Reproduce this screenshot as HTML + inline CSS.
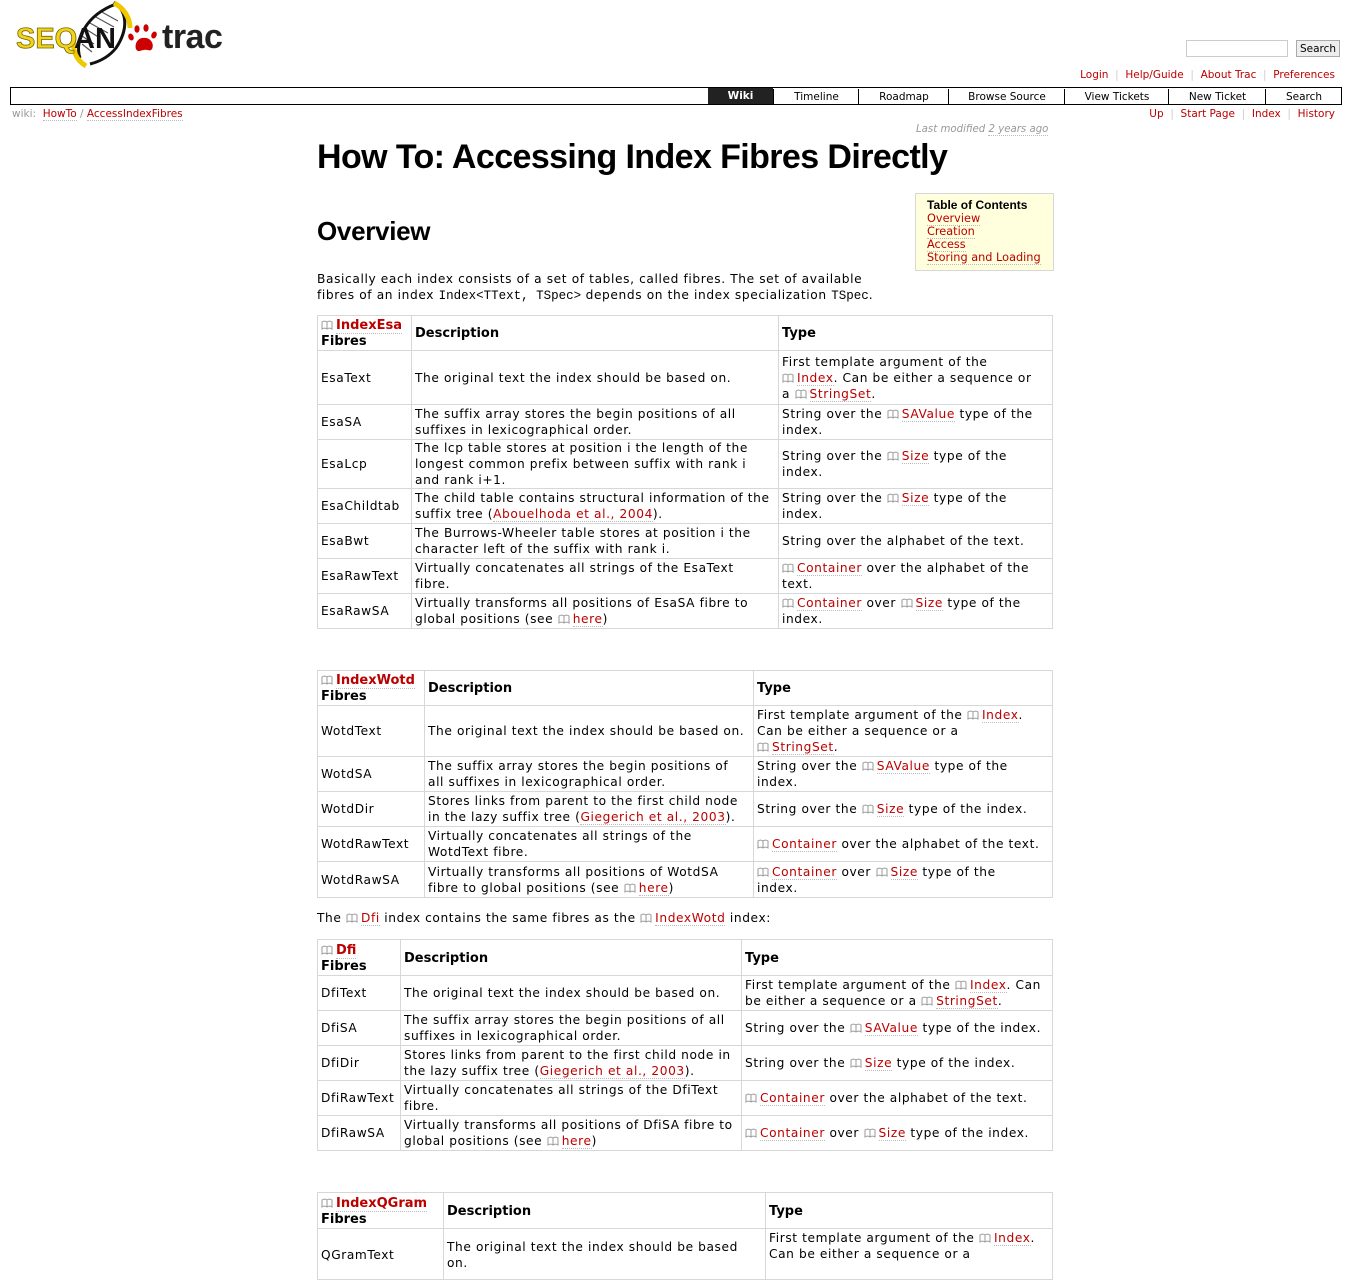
<!DOCTYPE html>
<html><head><meta charset="utf-8"><style>
body{margin:0;width:1352px;height:1249px;overflow:hidden;background:#fff;font-family:"DejaVu Sans","Liberation Sans",sans-serif;font-size:12px;color:#000;position:relative}
a{color:#b00;text-decoration:none;border-bottom:1px dotted #bbb}
.abs{position:absolute}
.meta a{color:#b00;border:none}
.bk{vertical-align:-1px;margin-right:3px}
table.w{position:absolute;left:317px;width:735px;border-collapse:collapse;table-layout:fixed;font-size:12.2px;letter-spacing:0.6px;line-height:16px}
table.w td,table.w th{border:1px solid #d7d7d7;padding:0 3px;vertical-align:middle;text-align:left;white-space:nowrap;overflow:hidden}
table.w th{font-weight:bold;font-size:13px;letter-spacing:0;padding-top:2px}
table.w th a{font-weight:bold}
tt{font-family:"Liberation Mono",monospace;font-size:12.5px;letter-spacing:0}
.nav{position:absolute;left:10px;top:87px;width:1330px;height:16px;border:1px solid #000;background:#fff}
.nav div{position:absolute;top:1px;height:16px;font-size:10.5px;line-height:16px;text-align:center;border-left:1px solid #000}
.small{font-size:10.5px}
</style></head><body>

<!-- logo -->
<div class="abs" style="left:16px;top:0;width:220px;height:70px">
<svg width="220" height="70" viewBox="0 0 220 70">
<g stroke="#555" stroke-width="1.2"><line x1="68" y1="28" x2="84" y2="38"/><line x1="72" y1="22" x2="92" y2="33"/><line x1="78" y1="16" x2="98" y2="27"/><line x1="84" y1="11" x2="102" y2="21"/><line x1="66" y1="36" x2="78" y2="44"/><line x1="66" y1="44" x2="76" y2="52"/></g>
<path d="M64 58 C58 40,70 15,100 4" fill="none" stroke="#111" stroke-width="3"/>
<path d="M98 2 C112 12,112 30,100 48 C92 58,82 62,74 64" fill="none" stroke="#111" stroke-width="3"/>
<path d="M98 3 C108 8,114 18,114 28" fill="none" stroke="#f0c800" stroke-width="5"/>
<path d="M58 38 C56 50,60 60,70 66" fill="none" stroke="#f0c800" stroke-width="5"/>
<text x="0" y="48" font-family="Liberation Sans" font-weight="bold" font-size="29" fill="#f2d31b" stroke="#776600" stroke-width="0.8">SEQ</text>
<text x="58" y="48" font-family="Liberation Sans" font-weight="bold" font-size="29" fill="#111">AN</text>
<g fill="#c00"><path d="M120 49 C118 42,124 37,128 38 C133 37,139 43,136 49 C134 52,131 49,128 50 C125 50,122 53,120 49Z"/><ellipse cx="115" cy="37" rx="2.6" ry="3.6" transform="rotate(-25 115 37)"/><ellipse cx="121" cy="29" rx="2.6" ry="3.8"/><ellipse cx="130" cy="28" rx="2.6" ry="3.8"/><ellipse cx="138" cy="35" rx="2.6" ry="3.6" transform="rotate(25 138 35)"/></g>
<text x="146" y="48" font-family="Liberation Sans" font-weight="bold" font-size="34" fill="#222" letter-spacing="-0.5">trac</text>
</svg></div>

<!-- search -->
<div class="abs" style="left:1186px;top:40px;width:100px;height:15px;border:1px solid #ccc"></div>
<div class="abs" style="left:1296px;top:40px;width:42px;height:15px;border:1px solid #aaa;background:#eee;font-size:10.5px;line-height:16px;text-align:center">Search</div>

<div class="abs meta small" style="right:17px;top:69px;color:#ccc">
<a>Login</a> &nbsp;|&nbsp; <a>Help/Guide</a> &nbsp;|&nbsp; <a>About Trac</a> &nbsp;|&nbsp; <a>Preferences</a></div>

<div class="nav">
<div style="left:697px;width:65px;background:#222;color:#fff;font-weight:bold;border:none;top:0;line-height:17px">Wiki</div>
<div style="left:762px;width:85px">Timeline</div>
<div style="left:847px;width:90px">Roadmap</div>
<div style="left:937px;width:116px">Browse Source</div>
<div style="left:1053px;width:104px">View Tickets</div>
<div style="left:1157px;width:97px">New Ticket</div>
<div style="left:1254px;width:76px">Search</div>
</div>

<div class="abs small" style="left:12px;top:108px;color:#999">wiki: &nbsp;<a style="font-size:10.5px">HowTo</a> / <a>AccessIndexFibres</a></div>
<div class="abs meta small" style="right:17px;top:108px;color:#ccc">
<a>Up</a> &nbsp;|&nbsp; <a>Start Page</a> &nbsp;|&nbsp; <a>Index</a> &nbsp;|&nbsp; <a>History</a></div>

<div class="abs" style="left:916px;top:124px;font-size:10.2px;font-style:italic;color:#999">Last modified <span style="border-bottom:1px dotted #bbb">2 years ago</span></div>

<div class="abs" style="left:317px;top:138px;font-family:'Liberation Sans',sans-serif;font-weight:bold;font-size:34px;letter-spacing:-0.6px;white-space:nowrap">How To: Accessing Index Fibres Directly</div>
<div class="abs" style="left:317px;top:216px;font-family:'Liberation Sans',sans-serif;font-weight:bold;font-size:26px;letter-spacing:-0.3px">Overview</div>

<div class="abs" style="left:915px;top:193px;width:121px;height:66px;padding:5px 5px 5px 11px;background:#ffffdd;border:1px solid #d7d7d7;font-size:11.3px;line-height:13px;white-space:nowrap">
<b style="font-family:'Liberation Sans',sans-serif;font-size:12px">Table of Contents</b><br><a>Overview</a><br><a>Creation</a><br><a>Access</a><br><a>Storing and Loading</a></div>

<div class="abs" style="left:317px;top:271px;font-size:12.2px;letter-spacing:0.62px;line-height:16px;white-space:nowrap">Basically each index consists of a set of tables, called fibres. The set of available<br>fibres of an index <tt>Index&lt;TText, TSpec&gt;</tt> depends on the index specialization <tt>TSpec</tt>.</div>

<!-- table 1 -->
<table class="w" style="top:315px">
<col style="width:94px"><col style="width:367px"><col style="width:274px">
<tr style="height:35px"><th><span style="line-height:16px"><svg class="bk" width="12" height="10" viewBox="0 0 12 10"><path d="M6 2C4.5 1 2.5 1 1 2V9C2.5 8 4.5 8 6 9C7.5 8 9.5 8 11 9V2C9.5 1 7.5 1 6 2ZM6 2V9" fill="none" stroke="#999"/></svg><a>IndexEsa</a><br>Fibres</span></th><th>Description</th><th>Type</th></tr>
<tr style="height:54px"><td>EsaText</td><td>The original text the index should be based on.</td><td>First template argument of the<br><svg class="bk" width="12" height="10" viewBox="0 0 12 10"><path d="M6 2C4.5 1 2.5 1 1 2V9C2.5 8 4.5 8 6 9C7.5 8 9.5 8 11 9V2C9.5 1 7.5 1 6 2ZM6 2V9" fill="none" stroke="#999"/></svg><a>Index</a>. Can be either a sequence or<br>a <svg class="bk" width="12" height="10" viewBox="0 0 12 10"><path d="M6 2C4.5 1 2.5 1 1 2V9C2.5 8 4.5 8 6 9C7.5 8 9.5 8 11 9V2C9.5 1 7.5 1 6 2ZM6 2V9" fill="none" stroke="#999"/></svg><a>StringSet</a>.</td></tr>
<tr style="height:35px"><td>EsaSA</td><td>The suffix array stores the begin positions of all<br>suffixes in lexicographical order.</td><td>String over the <svg class="bk" width="12" height="10" viewBox="0 0 12 10"><path d="M6 2C4.5 1 2.5 1 1 2V9C2.5 8 4.5 8 6 9C7.5 8 9.5 8 11 9V2C9.5 1 7.5 1 6 2ZM6 2V9" fill="none" stroke="#999"/></svg><a>SAValue</a> type of the<br>index.</td></tr>
<tr style="height:49px"><td>EsaLcp</td><td>The lcp table stores at position i the length of the<br>longest common prefix between suffix with rank i<br>and rank i+1.</td><td>String over the <svg class="bk" width="12" height="10" viewBox="0 0 12 10"><path d="M6 2C4.5 1 2.5 1 1 2V9C2.5 8 4.5 8 6 9C7.5 8 9.5 8 11 9V2C9.5 1 7.5 1 6 2ZM6 2V9" fill="none" stroke="#999"/></svg><a>Size</a> type of the<br>index.</td></tr>
<tr style="height:35px"><td>EsaChildtab</td><td>The child table contains structural information of the<br>suffix tree (<a>Abouelhoda et al., 2004</a>).</td><td>String over the <svg class="bk" width="12" height="10" viewBox="0 0 12 10"><path d="M6 2C4.5 1 2.5 1 1 2V9C2.5 8 4.5 8 6 9C7.5 8 9.5 8 11 9V2C9.5 1 7.5 1 6 2ZM6 2V9" fill="none" stroke="#999"/></svg><a>Size</a> type of the<br>index.</td></tr>
<tr style="height:35px"><td>EsaBwt</td><td>The Burrows-Wheeler table stores at position i the<br>character left of the suffix with rank i.</td><td>String over the alphabet of the text.</td></tr>
<tr style="height:35px"><td>EsaRawText</td><td>Virtually concatenates all strings of the EsaText<br>fibre.</td><td><svg class="bk" width="12" height="10" viewBox="0 0 12 10"><path d="M6 2C4.5 1 2.5 1 1 2V9C2.5 8 4.5 8 6 9C7.5 8 9.5 8 11 9V2C9.5 1 7.5 1 6 2ZM6 2V9" fill="none" stroke="#999"/></svg><a>Container</a> over the alphabet of the<br>text.</td></tr>
<tr style="height:35px"><td>EsaRawSA</td><td>Virtually transforms all positions of EsaSA fibre to<br>global positions (see <svg class="bk" width="12" height="10" viewBox="0 0 12 10"><path d="M6 2C4.5 1 2.5 1 1 2V9C2.5 8 4.5 8 6 9C7.5 8 9.5 8 11 9V2C9.5 1 7.5 1 6 2ZM6 2V9" fill="none" stroke="#999"/></svg><a>here</a>)</td><td><svg class="bk" width="12" height="10" viewBox="0 0 12 10"><path d="M6 2C4.5 1 2.5 1 1 2V9C2.5 8 4.5 8 6 9C7.5 8 9.5 8 11 9V2C9.5 1 7.5 1 6 2ZM6 2V9" fill="none" stroke="#999"/></svg><a>Container</a> over <svg class="bk" width="12" height="10" viewBox="0 0 12 10"><path d="M6 2C4.5 1 2.5 1 1 2V9C2.5 8 4.5 8 6 9C7.5 8 9.5 8 11 9V2C9.5 1 7.5 1 6 2ZM6 2V9" fill="none" stroke="#999"/></svg><a>Size</a> type of the<br>index.</td></tr>
</table>

<!-- table 2 -->
<table class="w" style="top:670px">
<col style="width:107px"><col style="width:329px"><col style="width:299px">
<tr style="height:35px"><th><span><svg class="bk" width="12" height="10" viewBox="0 0 12 10"><path d="M6 2C4.5 1 2.5 1 1 2V9C2.5 8 4.5 8 6 9C7.5 8 9.5 8 11 9V2C9.5 1 7.5 1 6 2ZM6 2V9" fill="none" stroke="#999"/></svg><a>IndexWotd</a><br>Fibres</span></th><th>Description</th><th>Type</th></tr>
<tr style="height:51px"><td>WotdText</td><td>The original text the index should be based on.</td><td>First template argument of the <svg class="bk" width="12" height="10" viewBox="0 0 12 10"><path d="M6 2C4.5 1 2.5 1 1 2V9C2.5 8 4.5 8 6 9C7.5 8 9.5 8 11 9V2C9.5 1 7.5 1 6 2ZM6 2V9" fill="none" stroke="#999"/></svg><a>Index</a>.<br>Can be either a sequence or a<br><svg class="bk" width="12" height="10" viewBox="0 0 12 10"><path d="M6 2C4.5 1 2.5 1 1 2V9C2.5 8 4.5 8 6 9C7.5 8 9.5 8 11 9V2C9.5 1 7.5 1 6 2ZM6 2V9" fill="none" stroke="#999"/></svg><a>StringSet</a>.</td></tr>
<tr style="height:35px"><td>WotdSA</td><td>The suffix array stores the begin positions of<br>all suffixes in lexicographical order.</td><td>String over the <svg class="bk" width="12" height="10" viewBox="0 0 12 10"><path d="M6 2C4.5 1 2.5 1 1 2V9C2.5 8 4.5 8 6 9C7.5 8 9.5 8 11 9V2C9.5 1 7.5 1 6 2ZM6 2V9" fill="none" stroke="#999"/></svg><a>SAValue</a> type of the<br>index.</td></tr>
<tr style="height:35px"><td>WotdDir</td><td>Stores links from parent to the first child node<br>in the lazy suffix tree (<a>Giegerich et al., 2003</a>).</td><td>String over the <svg class="bk" width="12" height="10" viewBox="0 0 12 10"><path d="M6 2C4.5 1 2.5 1 1 2V9C2.5 8 4.5 8 6 9C7.5 8 9.5 8 11 9V2C9.5 1 7.5 1 6 2ZM6 2V9" fill="none" stroke="#999"/></svg><a>Size</a> type of the index.</td></tr>
<tr style="height:35px"><td>WotdRawText</td><td>Virtually concatenates all strings of the<br>WotdText fibre.</td><td><svg class="bk" width="12" height="10" viewBox="0 0 12 10"><path d="M6 2C4.5 1 2.5 1 1 2V9C2.5 8 4.5 8 6 9C7.5 8 9.5 8 11 9V2C9.5 1 7.5 1 6 2ZM6 2V9" fill="none" stroke="#999"/></svg><a>Container</a> over the alphabet of the text.</td></tr>
<tr style="height:36px"><td>WotdRawSA</td><td>Virtually transforms all positions of WotdSA<br>fibre to global positions (see <svg class="bk" width="12" height="10" viewBox="0 0 12 10"><path d="M6 2C4.5 1 2.5 1 1 2V9C2.5 8 4.5 8 6 9C7.5 8 9.5 8 11 9V2C9.5 1 7.5 1 6 2ZM6 2V9" fill="none" stroke="#999"/></svg><a>here</a>)</td><td><svg class="bk" width="12" height="10" viewBox="0 0 12 10"><path d="M6 2C4.5 1 2.5 1 1 2V9C2.5 8 4.5 8 6 9C7.5 8 9.5 8 11 9V2C9.5 1 7.5 1 6 2ZM6 2V9" fill="none" stroke="#999"/></svg><a>Container</a> over <svg class="bk" width="12" height="10" viewBox="0 0 12 10"><path d="M6 2C4.5 1 2.5 1 1 2V9C2.5 8 4.5 8 6 9C7.5 8 9.5 8 11 9V2C9.5 1 7.5 1 6 2ZM6 2V9" fill="none" stroke="#999"/></svg><a>Size</a> type of the<br>index.</td></tr>
</table>

<div class="abs" style="left:317px;top:910px;font-size:12.2px;letter-spacing:0.6px;line-height:16px;white-space:nowrap">The <svg class="bk" width="12" height="10" viewBox="0 0 12 10"><path d="M6 2C4.5 1 2.5 1 1 2V9C2.5 8 4.5 8 6 9C7.5 8 9.5 8 11 9V2C9.5 1 7.5 1 6 2ZM6 2V9" fill="none" stroke="#999"/></svg><a>Dfi</a> index contains the same fibres as the <svg class="bk" width="12" height="10" viewBox="0 0 12 10"><path d="M6 2C4.5 1 2.5 1 1 2V9C2.5 8 4.5 8 6 9C7.5 8 9.5 8 11 9V2C9.5 1 7.5 1 6 2ZM6 2V9" fill="none" stroke="#999"/></svg><a>IndexWotd</a> index:</div>

<!-- table 3 -->
<table class="w" style="top:939px">
<col style="width:83px"><col style="width:341px"><col style="width:311px">
<tr style="height:36px"><th><span><svg class="bk" width="12" height="10" viewBox="0 0 12 10"><path d="M6 2C4.5 1 2.5 1 1 2V9C2.5 8 4.5 8 6 9C7.5 8 9.5 8 11 9V2C9.5 1 7.5 1 6 2ZM6 2V9" fill="none" stroke="#999"/></svg><a>Dfi</a><br>Fibres</span></th><th>Description</th><th>Type</th></tr>
<tr style="height:35px"><td>DfiText</td><td>The original text the index should be based on.</td><td>First template argument of the <svg class="bk" width="12" height="10" viewBox="0 0 12 10"><path d="M6 2C4.5 1 2.5 1 1 2V9C2.5 8 4.5 8 6 9C7.5 8 9.5 8 11 9V2C9.5 1 7.5 1 6 2ZM6 2V9" fill="none" stroke="#999"/></svg><a>Index</a>. Can<br>be either a sequence or a <svg class="bk" width="12" height="10" viewBox="0 0 12 10"><path d="M6 2C4.5 1 2.5 1 1 2V9C2.5 8 4.5 8 6 9C7.5 8 9.5 8 11 9V2C9.5 1 7.5 1 6 2ZM6 2V9" fill="none" stroke="#999"/></svg><a>StringSet</a>.</td></tr>
<tr style="height:35px"><td>DfiSA</td><td>The suffix array stores the begin positions of all<br>suffixes in lexicographical order.</td><td>String over the <svg class="bk" width="12" height="10" viewBox="0 0 12 10"><path d="M6 2C4.5 1 2.5 1 1 2V9C2.5 8 4.5 8 6 9C7.5 8 9.5 8 11 9V2C9.5 1 7.5 1 6 2ZM6 2V9" fill="none" stroke="#999"/></svg><a>SAValue</a> type of the index.</td></tr>
<tr style="height:35px"><td>DfiDir</td><td>Stores links from parent to the first child node in<br>the lazy suffix tree (<a>Giegerich et al., 2003</a>).</td><td>String over the <svg class="bk" width="12" height="10" viewBox="0 0 12 10"><path d="M6 2C4.5 1 2.5 1 1 2V9C2.5 8 4.5 8 6 9C7.5 8 9.5 8 11 9V2C9.5 1 7.5 1 6 2ZM6 2V9" fill="none" stroke="#999"/></svg><a>Size</a> type of the index.</td></tr>
<tr style="height:35px"><td>DfiRawText</td><td>Virtually concatenates all strings of the DfiText<br>fibre.</td><td><svg class="bk" width="12" height="10" viewBox="0 0 12 10"><path d="M6 2C4.5 1 2.5 1 1 2V9C2.5 8 4.5 8 6 9C7.5 8 9.5 8 11 9V2C9.5 1 7.5 1 6 2ZM6 2V9" fill="none" stroke="#999"/></svg><a>Container</a> over the alphabet of the text.</td></tr>
<tr style="height:35px"><td>DfiRawSA</td><td>Virtually transforms all positions of DfiSA fibre to<br>global positions (see <svg class="bk" width="12" height="10" viewBox="0 0 12 10"><path d="M6 2C4.5 1 2.5 1 1 2V9C2.5 8 4.5 8 6 9C7.5 8 9.5 8 11 9V2C9.5 1 7.5 1 6 2ZM6 2V9" fill="none" stroke="#999"/></svg><a>here</a>)</td><td><svg class="bk" width="12" height="10" viewBox="0 0 12 10"><path d="M6 2C4.5 1 2.5 1 1 2V9C2.5 8 4.5 8 6 9C7.5 8 9.5 8 11 9V2C9.5 1 7.5 1 6 2ZM6 2V9" fill="none" stroke="#999"/></svg><a>Container</a> over <svg class="bk" width="12" height="10" viewBox="0 0 12 10"><path d="M6 2C4.5 1 2.5 1 1 2V9C2.5 8 4.5 8 6 9C7.5 8 9.5 8 11 9V2C9.5 1 7.5 1 6 2ZM6 2V9" fill="none" stroke="#999"/></svg><a>Size</a> type of the index.</td></tr>
</table>

<!-- table 4 -->
<table class="w" style="top:1192px">
<col style="width:126px"><col style="width:322px"><col style="width:287px">
<tr style="height:36px"><th><span><svg class="bk" width="12" height="10" viewBox="0 0 12 10"><path d="M6 2C4.5 1 2.5 1 1 2V9C2.5 8 4.5 8 6 9C7.5 8 9.5 8 11 9V2C9.5 1 7.5 1 6 2ZM6 2V9" fill="none" stroke="#999"/></svg><a>IndexQGram</a><br>Fibres</span></th><th>Description</th><th>Type</th></tr>
<tr style="height:51px"><td style="vertical-align:top;padding-top:18px">QGramText</td><td style="vertical-align:top;padding-top:10px">The original text the index should be based<br>on.</td><td style="vertical-align:top;padding-top:1px">First template argument of the <svg class="bk" width="12" height="10" viewBox="0 0 12 10"><path d="M6 2C4.5 1 2.5 1 1 2V9C2.5 8 4.5 8 6 9C7.5 8 9.5 8 11 9V2C9.5 1 7.5 1 6 2ZM6 2V9" fill="none" stroke="#999"/></svg><a>Index</a>.<br>Can be either a sequence or a</td></tr>
</table>

</body></html>
